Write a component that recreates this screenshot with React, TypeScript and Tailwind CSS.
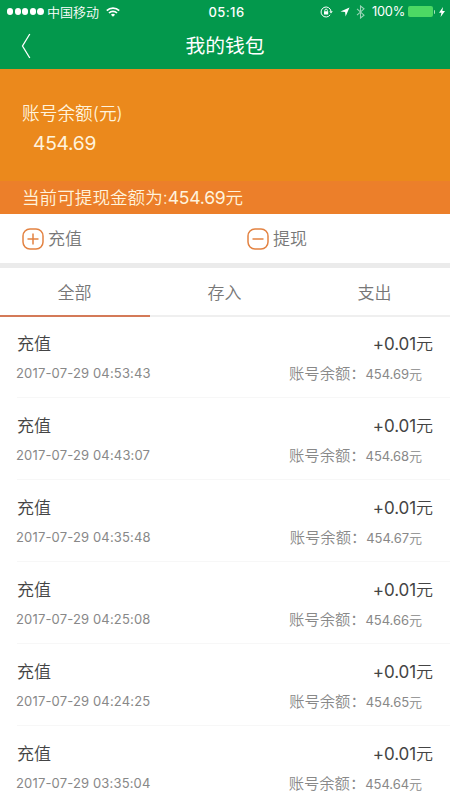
const transactions = [
  { time: '2017-07-29 04:53:43', balance: '454.69' },
  { time: '2017-07-29 04:43:07', balance: '454.68' },
  { time: '2017-07-29 04:35:48', balance: '454.67' },
  { time: '2017-07-29 04:25:08', balance: '454.66' },
  { time: '2017-07-29 04:24:25', balance: '454.65' },
  { time: '2017-07-29 03:35:04', balance: '454.64' },
];

const tabs = ['全部', '存入', '支出'];

const StatusBar = () => (
  <div className="grid h-[22px] grid-cols-[1fr_auto_1fr] items-center pl-[7px] pr-[5px] text-xs leading-[22px]">
    <div className="flex items-center">
      <div className="flex gap-[1.4px]">
        {[0, 1, 2, 3, 4].map((dot) => (
          <span key={dot} className="size-[6.2px] rounded-full bg-white" />
        ))}
      </div>
      <span className="ml-[3.5px] text-[13px] font-[350]">中国移动</span>
      <svg className="ml-[7px] h-[10px] w-[14px]" viewBox="0 0 14 10" fill="none" stroke="white" strokeWidth="1.7">
        <path d="M0.8 3.6a8.8 8.8 0 0 1 12.4 0M3 6a5.7 5.7 0 0 1 8 0" />
        <path d="M7 9.8 4.9 7.7a3 3 0 0 1 4.2 0z" fill="white" stroke="none" />
      </svg>
    </div>
    <span className="pl-px text-[13px] font-medium tracking-[0.4px]">05:16</span>
    <div className="flex items-center justify-end">
      <svg className="h-3 w-[13px]" viewBox="0 0 13 12" fill="none" stroke="white">
        <path d="M10.2 8.8a5 5 0 1 1 .8-3.6" />
        <path d="M9.3 5.2h3.5L11 7.6z" fill="white" stroke="none" />
        <path d="M4.8 5.5V4.4a1.3 1.3 0 0 1 2.6 0v1.1" strokeWidth="0.9" />
        <rect x="4" y="5.3" width="4.2" height="3.2" rx="0.3" fill="white" stroke="none" />
      </svg>
      <svg className="ml-[7px] size-[10px]" viewBox="0 0 10 10" fill="white">
        <path d="M9.5.5 5.6 9.5 5.1 5.1.5 4.6z" />
      </svg>
      <svg className="ml-[6px] h-[14px] w-[9px] opacity-60" viewBox="0 0 9 14" fill="none" stroke="white" strokeWidth="1.1">
        <path d="m1 3.8 7 6.4-3.5 2.8V1L8 3.8l-7 6.4" />
      </svg>
      <span className="ml-[7px] pt-px text-[12.8px] tracking-[-0.25px]">100%</span>
      <span className="ml-[3px] h-[11px] w-[25px] rounded-[2px] bg-[#4cd964]" />
      <span className="ml-px h-1 w-px rounded-r bg-[#a9dfba]" />
      <svg className="ml-[4px] h-[10px] w-[6px]" viewBox="0 0 6 10" fill="white">
        <path d="M4 0 0 5.7h2.4L1.6 10 6 4.1H3.4z" />
      </svg>
    </div>
  </div>
);

const ActionIcon = ({ plus = false }: { plus?: boolean }) => (
  <svg className="size-[22px]" viewBox="0 0 22 22" fill="none" stroke="#e38241" strokeWidth="1.5">
    <rect x="1" y="1" width="20" height="20" rx="7" />
    <path d={plus ? 'M5.5 11h11M11 5.5v11' : 'M5.5 11h11'} />
  </svg>
);

const App = () => {
  return (
    <div className="h-[800px] w-[450px] overflow-hidden bg-white font-['Inter','Noto_Sans_CJK_SC',sans-serif] text-[#444]">
      <header className="h-[69px] bg-[#03984c] text-white">
        <StatusBar />
        <div className="grid h-[47px] grid-cols-[1fr_auto_1fr] items-center">
          <svg className="ml-[21px] h-[26px] w-[10px]" viewBox="0 0 10 26" fill="none" stroke="white" strokeWidth="1.3">
            <path d="M8.8 1 1.5 13l7.3 12" />
          </svg>
          <h1 className="pt-[2px] text-[19.8px] font-normal">我的钱包</h1>
        </div>
      </header>

      <section className="font-[350] text-[#fff3dc]">
        <div className="h-[112px] bg-[#eb891c] pt-[31px] pl-[22px]">
          <p className="text-[17.7px] leading-7">账号余额(元)</p>
          <p className="mt-px pl-[11px] text-[19.2px] leading-7 font-normal tracking-[-0.25px]">454.69</p>
        </div>
        <p className="h-[33px] bg-[#ec7f2a] pl-[22px] text-[17.6px] leading-[34px]">
          当前可提现金额为:<span className="font-normal tracking-[-0.25px]">454.69</span>元
        </p>
      </section>

      <div className="grid h-[49px] grid-cols-2 text-[17px] font-[350] text-[#777]">
        <button className="flex items-center gap-[4px] pl-[22px]">
          <ActionIcon plus />
          <span className="pt-[2px]">充值</span>
        </button>
        <button className="flex items-center gap-[4px] pl-[22px]">
          <ActionIcon />
          <span className="pt-[2px]">提现</span>
        </button>
      </div>

      <nav className="grid h-[54px] grid-cols-3 border-t-[5px] border-[#ebebeb] text-[17px] font-[350] text-[#777]">
        {tabs.map((tab, index) => (
          <button
            key={tab}
            className={`border-b-2 pt-1 pr-px leading-[43px] ${index === 0 ? 'border-b-[#d47a58]' : 'border-b-[#efefef]'}`}
          >
            {tab}
          </button>
        ))}
      </nav>

      <ul className="-mt-px">
        {transactions.map((item) => (
          <li key={item.time} className="ml-[17px] h-[82px] border-b border-[#f7f7f7] pt-[14px] pr-[17px]">
            <div className="flex justify-between text-[17px] leading-7 font-[350]">
              <span>充值</span>
              <span>
                <span className="font-normal tracking-[-0.1px]">+0.01</span>元
              </span>
            </div>
            <div className="mt-px flex justify-between pr-[11px] text-[13px] leading-7 font-[350] text-[#888]">
              <span className="-ml-px font-normal tracking-[0.16px]">{item.time}</span>
              <span className="pt-px">
                <span className="text-[15.3px]">账号余额：</span>
                <span className="font-normal tracking-[-0.06px]">{item.balance}</span>元
              </span>
            </div>
          </li>
        ))}
      </ul>
    </div>
  );
};

export default App;
